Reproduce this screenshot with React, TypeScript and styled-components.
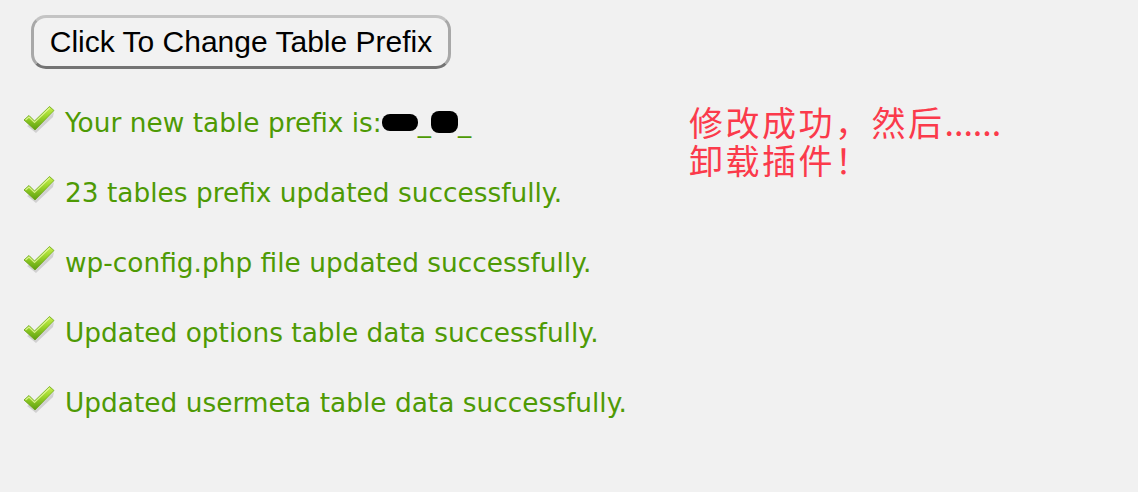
import styled, { createGlobalStyle } from "styled-components";

const GlobalStyle = createGlobalStyle`
  html, body {
    margin: 0;
    padding: 0;
    background: #f1f1f1;
  }
`

const Page = styled.div`
  display: flex;
  align-items: flex-start;
  width: 1138px;
  height: 492px;
  box-sizing: border-box;
  padding: 15px 0 0 24px;
`

const LeftColumn = styled.div`
  display: flex;
  flex-direction: column;
  width: 640px;
`

const ChangeButton = styled.button`
  align-self: flex-start;
  margin-left: 7px;
  width: 420px;
  height: 54px;
  box-sizing: border-box;
  padding: 0;
  border-radius: 15px;
  border: 3px solid #a8a8a8;
  border-top-color: #c4c4c4;
  border-bottom-color: #747474;
  background: #f2f2f2;
  color: #000;
  font-family: "Liberation Sans", Arial, sans-serif;
  font-size: 30px;
  cursor: pointer;
`

const MessageList = styled.div`
  display: flex;
  flex-direction: column;
  margin-top: 18px;
`

const MessageRow = styled.div`
  display: flex;
  align-items: center;
  height: 70px;
  color: #4e9a04;
  font-family: "DejaVu Sans", Verdana, sans-serif;
  font-size: 26.4px;
  white-space: nowrap;
`

const CheckBox = styled.span`
  display: flex;
  width: 32px;
  height: 27px;
  margin-left: -1px;
  margin-right: 10px;
  margin-top: -6px;
`

const Redacted = styled.span<{ $w: number; $h: number }>`
  display: inline-block;
  width: ${(p) => p.$w}px;
  height: ${(p) => p.$h}px;
  background: #000;
  border-radius: 8px;
  vertical-align: -3px;
`

const Note = styled.div`
  margin-left: 25px;
  margin-top: 88px;
  color: #fb3a4b;
  font-family: "Noto Sans CJK SC", sans-serif;
  font-size: 34px;
  line-height: 38px;
  letter-spacing: 2.5px;

  .dots {
    letter-spacing: 0;
  }
`

function CheckIcon() {
  return (
    <svg width="32" height="27" viewBox="0 0 32 27">
      <defs>
        <linearGradient id="chk" x1="0" y1="0" x2="0" y2="1">
          <stop offset="0" stopColor="#c8f050" />
          <stop offset="0.5" stopColor="#94d026" />
          <stop offset="1" stopColor="#5c9c10" />
        </linearGradient>
      </defs>
      <path d="M4 20 L9 17 L13 22 L31 6 L30 11 L13 27 Z" fill="#000" opacity="0.13" />
      <path d="M1 14 L6 9.5 L11.5 15 L26.5 0.5 L31 4.5 L12 24 Z" fill="url(#chk)" stroke="#6aa514" strokeWidth="0.8" />
      <path d="M2.5 14 L6 11 L11.5 16.5 L26.5 2" fill="none" stroke="#eafba8" strokeWidth="1.2" opacity="0.8" />
    </svg>
  );
}

const messages = [
  "23 tables prefix updated successfully.",
  "wp-config.php file updated successfully.",
  "Updated options table data successfully.",
  "Updated usermeta table data successfully.",
];

export default function App() {
  return (
    <>
      <GlobalStyle />
      <Page>
        <LeftColumn>
          <ChangeButton>Click To Change Table Prefix</ChangeButton>
          <MessageList>
            <MessageRow>
              <CheckBox><CheckIcon /></CheckBox>
              Your new table prefix is:
              <Redacted $w={36} $h={17} />_<Redacted $w={27} $h={22} />_
            </MessageRow>
            {messages.map((m) => (
              <MessageRow key={m}>
                <CheckBox><CheckIcon /></CheckBox>
                {m}
              </MessageRow>
            ))}
          </MessageList>
        </LeftColumn>
        <Note>
          修改成功，然后<span className="dots">......</span>
          <br />
          卸载插件！
        </Note>
      </Page>
    </>
  );
}
